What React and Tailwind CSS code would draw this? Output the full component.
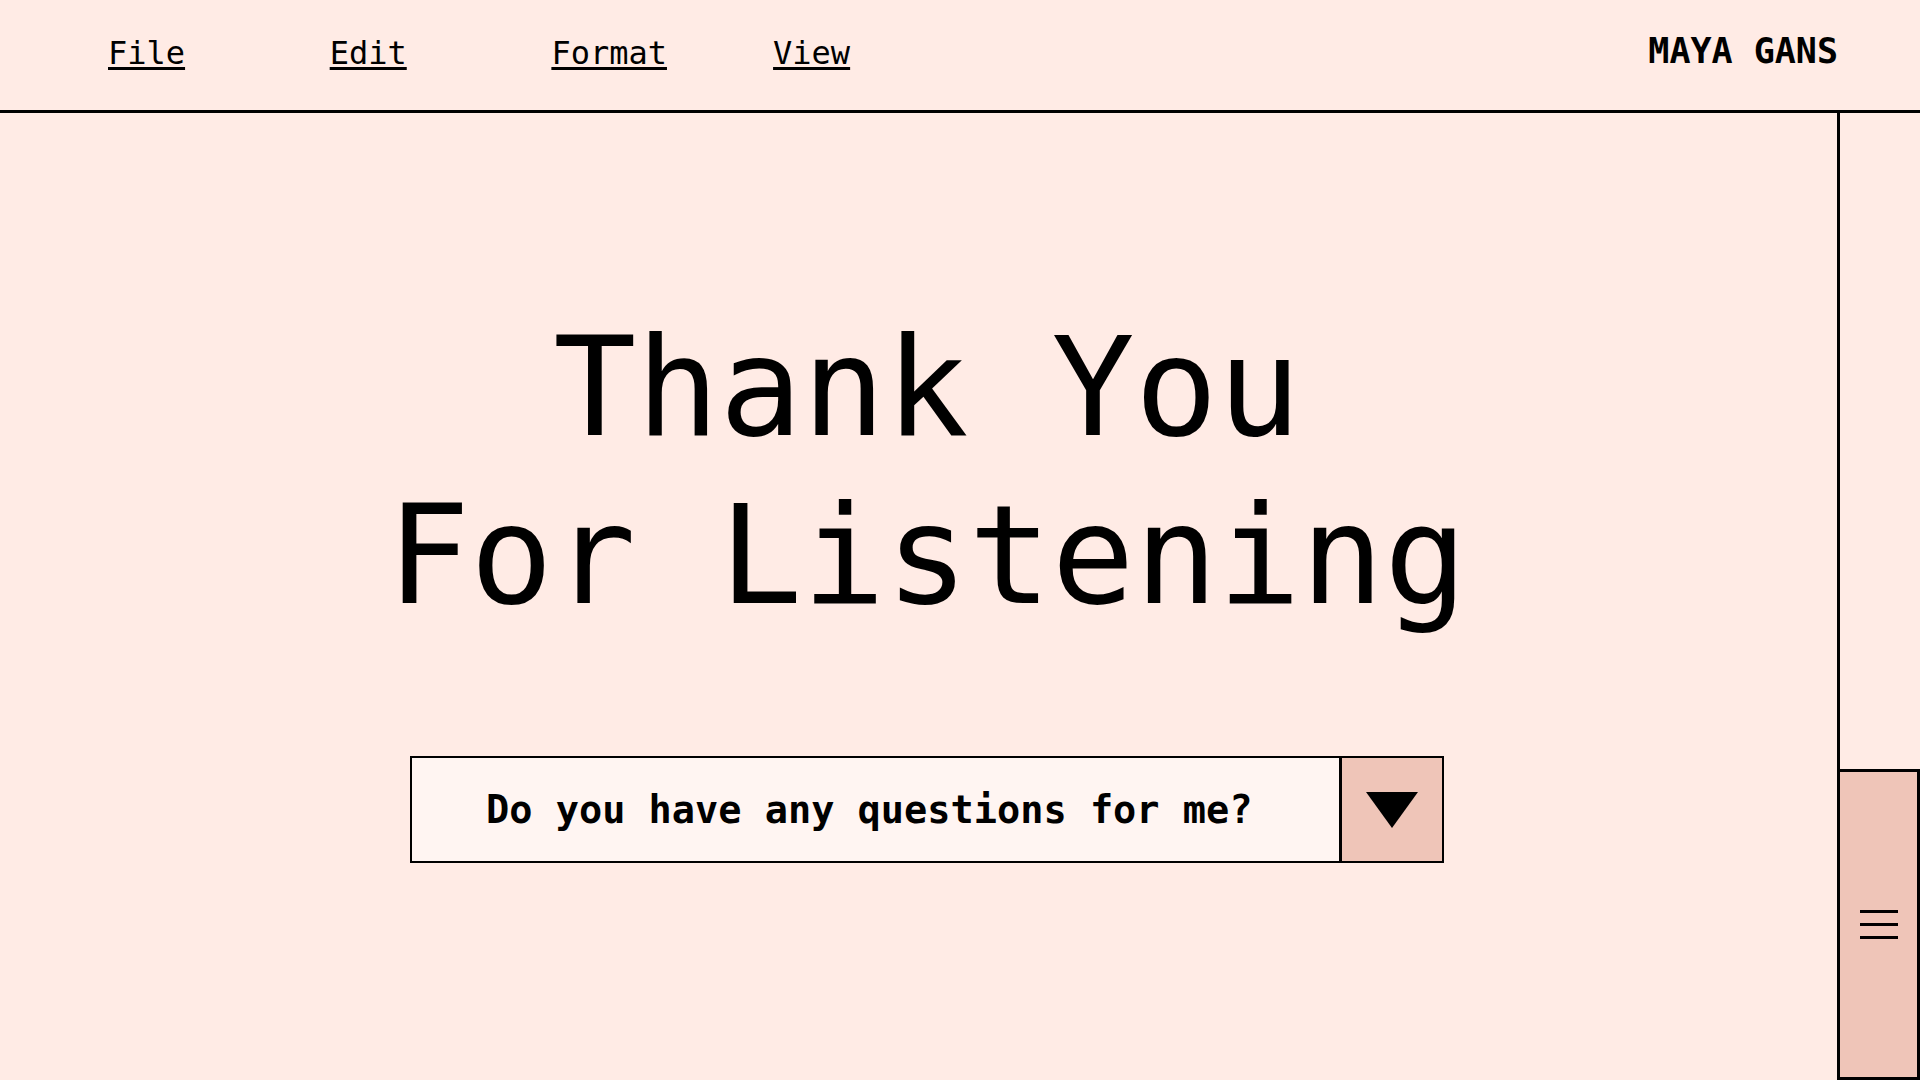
const mono = { fontFamily: '"DejaVu Sans Mono", "Liberation Mono", monospace' };

const menuItems = ["File", "Edit", "Format", "View"];

function Header() {
  return (
    <header className="flex h-[113px] shrink-0 items-start justify-between border-b-[3px] border-black">
      {/* Menu */}
      <nav className="flex pl-[108px] pt-[37px]">
        {menuItems.map((item) => (
          <a
            key={item}
            href="#"
            className="w-[221.7px] text-[32px] leading-[32px] text-black underline decoration-[3px] underline-offset-[3px]"
          >
            {item}
          </a>
        ))}
      </nav>

      <div className="pr-[82px] pt-[34px] text-[35px] font-bold leading-[35px] text-black">
        MAYA GANS
      </div>
    </header>
  );
}

function QuestionSelect() {
  return (
    <div className="flex h-[107px] w-[1034px] border-2 border-black">
      <div className="flex flex-1 items-center bg-[#fff5f2] pl-[74px] text-[38.6px] font-bold leading-[38px] text-black">
        Do you have any questions for me?
      </div>
      <button className="flex w-[103px] items-center justify-center border-l-[3px] border-black bg-[#efc5b8]">
        <svg width="52" height="36" viewBox="0 0 52 36">
          <polygon points="0,0 52,0 26,36" fill="#000" />
        </svg>
      </button>
    </div>
  );
}

function Sidebar() {
  return (
    <aside className="flex w-[83px] shrink-0 flex-col border-l-[3px] border-black">
      <div className="mt-auto flex h-[311px] items-center justify-center border-t-[3px] border-r-[3px] border-b-[3px] border-black bg-[#efc5b8]">
        <div className="flex flex-col gap-[10px]">
          <div className="h-[3px] w-[38px] bg-black" />
          <div className="h-[3px] w-[38px] bg-black" />
          <div className="h-[3px] w-[38px] bg-black" />
        </div>
      </div>
    </aside>
  );
}

export default function App() {
  return (
    <div
      className="flex h-[1080px] w-[1920px] flex-col overflow-hidden bg-[#ffebe5] text-black"
      style={mono}
    >
      <Header />

      <div className="flex flex-1">
        {/* Slide body */}
        <main className="flex flex-1 flex-col items-center pl-[17px] pt-[191px]">
          <h1 className="text-center text-[138px] font-normal leading-[168px]">
            Thank You
            <br />
            For Listening
          </h1>
          <div className="mt-[116px]">
            <QuestionSelect />
          </div>
        </main>

        <Sidebar />
      </div>
    </div>
  );
}
